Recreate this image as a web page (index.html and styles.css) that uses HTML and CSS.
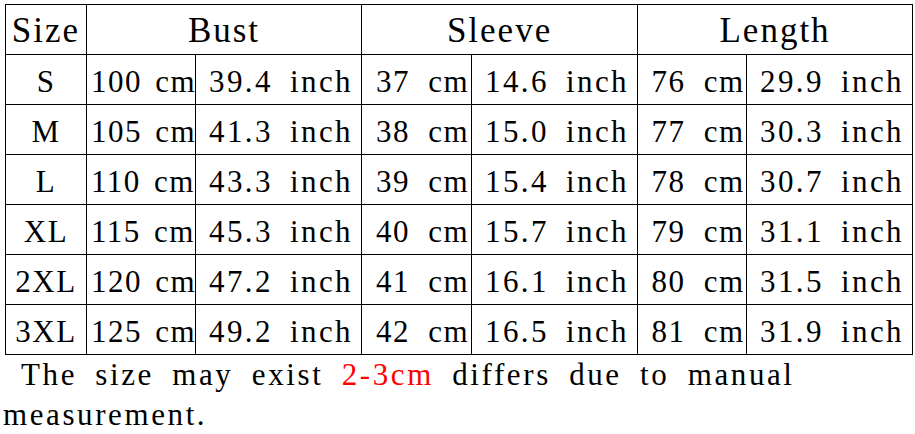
FILE: index.html
```html
<!DOCTYPE html>
<html lang="en">
<head>
    <meta charset="UTF-8">
    <meta name="viewport" content="width=device-width, initial-scale=1.0">
    <title>Size Chart</title>
    <link rel="stylesheet" href="styles.css">
</head>
<body>

    <div class="chart">
        <table class="size-table">
            <colgroup>
                <col class="col-size">
                <col class="col-cm">
                <col class="col-inch">
                <col class="col-cm2">
                <col class="col-inch">
                <col class="col-cm">
                <col class="col-inch">
            </colgroup>
            <thead>
                <tr>
                    <th>Size</th>
                    <th colspan="2">Bust</th>
                    <th colspan="2">Sleeve</th>
                    <th colspan="2">Length</th>
                </tr>
            </thead>
            <tbody>
                <tr>
                    <td class="size">S</td>
                    <td class="cm">100 cm</td><td>39.4 inch</td>
                    <td class="short">37 cm</td><td>14.6 inch</td>
                    <td class="short">76 cm</td><td>29.9 inch</td>
                </tr>
                <tr>
                    <td class="size">M</td>
                    <td class="cm">105 cm</td><td>41.3 inch</td>
                    <td class="short">38 cm</td><td>15.0 inch</td>
                    <td class="short">77 cm</td><td>30.3 inch</td>
                </tr>
                <tr>
                    <td class="size">L</td>
                    <td class="cm">110 cm</td><td>43.3 inch</td>
                    <td class="short">39 cm</td><td>15.4 inch</td>
                    <td class="short">78 cm</td><td>30.7 inch</td>
                </tr>
                <tr>
                    <td class="size">XL</td>
                    <td class="cm">115 cm</td><td>45.3 inch</td>
                    <td class="short">40 cm</td><td>15.7 inch</td>
                    <td class="short">79 cm</td><td>31.1 inch</td>
                </tr>
                <tr>
                    <td class="size">2XL</td>
                    <td class="cm">120 cm</td><td>47.2 inch</td>
                    <td class="short">41 cm</td><td>16.1 inch</td>
                    <td class="short">80 cm</td><td>31.5 inch</td>
                </tr>
                <tr>
                    <td class="size">3XL</td>
                    <td class="cm">125 cm</td><td>49.2 inch</td>
                    <td class="short">42 cm</td><td>16.5 inch</td>
                    <td class="short">81 cm</td><td>31.9 inch</td>
                </tr>
            </tbody>
        </table>

        <p class="note">The size may exist <span class="accent">2-3cm</span> differs due to manual<br>measurement.</p>
    </div>

</body>
</html>
```

FILE: styles.css
```css
body {
    margin: 0;
    padding: 0;
    background-color: #fff;
    color: #000;
    font-family: "Liberation Serif", "Times New Roman", serif;
}
.chart {
    padding: 4px 0 0 5px;
}
.size-table {
    border-collapse: collapse;
    table-layout: fixed;
    width: 907px;
}
.col-size {
    width: 81px;
}
.col-cm {
    width: 109px;
}
.col-cm2 {
    width: 110px;
}
.col-inch {
    width: 166px;
}
.size-table th,
.size-table td {
    border: 1px solid #000;
    padding: 0;
    text-align: center;
    white-space: nowrap;
}
.size-table th {
    height: 47px;
    font-size: 35px;
    font-weight: normal;
    letter-spacing: 2px;
    padding-top: 2px;
    line-height: 40px;
}
.size-table td {
    height: 45px;
    font-size: 31px;
    line-height: 36px;
    letter-spacing: 2.4px;
    word-spacing: 7px;
    padding: 4px 0 0 5px;
}
.size-table td.size {
    padding-left: 0;
    letter-spacing: 1.5px;
}
.size-table td.cm {
    letter-spacing: 1.5px;
    word-spacing: 4px;
    padding-left: 4px;
}
.size-table td.short {
    letter-spacing: 1.5px;
    word-spacing: 9px;
    padding-left: 12px;
}
.note {
    margin: 0 0 0 -2px;
    font-size: 31px;
    line-height: 40px;
    letter-spacing: 2.6px;
    word-spacing: 8px;
    text-indent: 18px;
}
.accent {
    color: #ff0000;
}
```
